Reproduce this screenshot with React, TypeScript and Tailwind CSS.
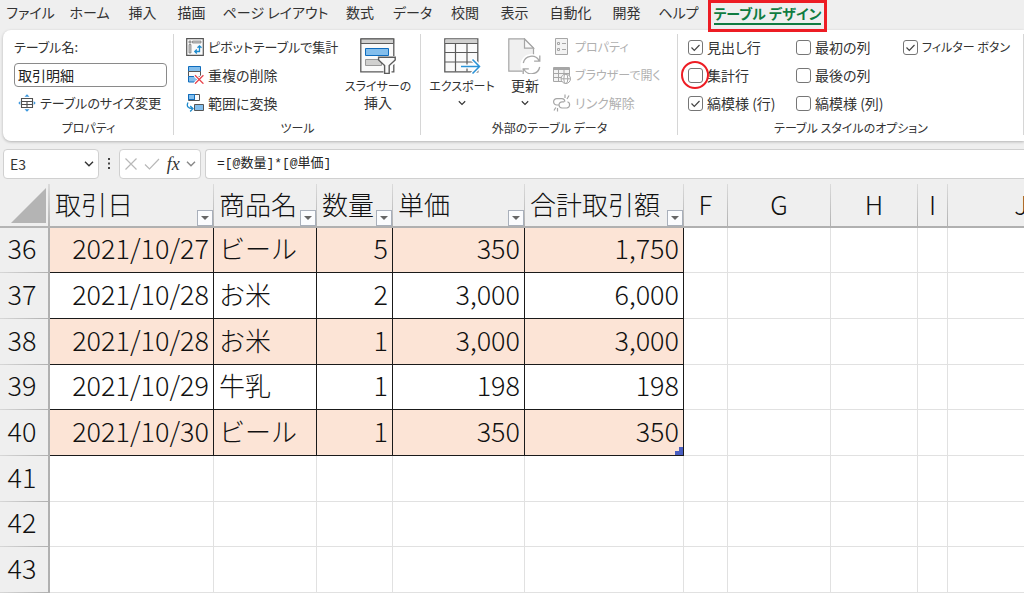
import { FC, ReactNode, useState } from "react"
import clsx from "clsx"

const tabs = [
  { title: "ファイル", width: "w-[61px]" },
  { title: "ホーム", width: "w-[57px]" },
  { title: "挿入", width: "w-[49px]" },
  { title: "描画", width: "w-[49px]" },
  { title: "ページ レイアウト", width: "w-[119px]" },
  { title: "数式", width: "w-[50px]" },
  { title: "データ", width: "w-[55px]" },
  { title: "校閲", width: "w-[50px]" },
  { title: "表示", width: "w-[49px]" },
  { title: "自動化", width: "w-[63px]" },
  { title: "開発", width: "w-[49px]" },
  { title: "ヘルプ", width: "w-[55px]" },
]

const columns = [
  { title: "取引日", width: "w-[164px]", filter: true },
  { title: "商品名", width: "w-[103px]", filter: true },
  { title: "数量", width: "w-[76px]", filter: true },
  { title: "単価", width: "w-[132px]", filter: true },
  { title: "合計取引額", width: "w-[159px]", filter: true },
  { title: "F", width: "w-[44px]" },
  { title: "G", width: "w-[103px]" },
  { title: "H", width: "w-[87px]" },
  { title: "I", width: "w-[30px]" },
  { title: "J", width: "w-[147px]" },
]

const rows: { no: number; cells: string[] }[] = [
  { no: 36, cells: ["2021/10/27", "ビール", "5", "350", "1,750"] },
  { no: 37, cells: ["2021/10/28", "お米", "2", "3,000", "6,000"] },
  { no: 38, cells: ["2021/10/28", "お米", "1", "3,000", "3,000"] },
  { no: 39, cells: ["2021/10/29", "牛乳", "1", "198", "198"] },
  { no: 40, cells: ["2021/10/30", "ビール", "1", "350", "350"] },
  { no: 41, cells: [] },
  { no: 42, cells: [] },
  { no: 43, cells: [] },
]

const Chevron: FC<{ className?: string }> = ({ className }) => (
  <svg className={className} width="10" height="6" viewBox="0 0 10 6" fill="none" stroke="currentColor" strokeWidth="1.4">
    <path d="M1 .8 5 4.8 9 .8" />
  </svg>
)

const ResizeIcon = () => (
  <svg width="18" height="18" viewBox="0 0 18 18" fill="none">
    <path d="M3.500 4.500h11v9h-11zM3.500 7.500h11M9 7.500v6M3.500 10.500h11" stroke="#505050" strokeWidth="1.100" />
    <path d="M9 .300 11.500 2.800h-5zM9 17.700l2.500-2.500h-5zM.300 9l2-2v4zM17.700 9l-2-2v4z" fill="#3a96dd" />
  </svg>
)

const PivotIcon = () => (
  <svg width="18" height="18" viewBox="0 0 18 18" fill="none">
    <path d="M.7.700h16.600v16.600H.7z" stroke="#555" strokeWidth="1.200" fill="#fafafa" />
    <path d="M3 3h2v2H3zM6.500 3h8.500v2H6.500zM3 6.500h2V15H3z" fill="#c8c8c8" stroke="#777" strokeWidth=".7" />
    <path d="M9 13.500h4.500V8M11.500 9.800l2-2 2 2M10.800 11.500l-2 2 2 2" stroke="#1e8bcd" strokeWidth="1.300" />
  </svg>
)

const DuplicateIcon = () => (
  <svg width="18" height="18" viewBox="0 0 18 18" fill="none">
    <path d="M2.500.500h12v5h-12z" fill="#83beec" stroke="#0f6cbd" />
    <path d="M2.500 5.500h12v5h-12z" fill="#fafafa" stroke="#555" />
    <path d="M2.500 10.500h8v5.500h-8z" fill="#83beec" stroke="#0f6cbd" />
    <path d="m9 9.300 8.400 8.400M17.400 9.300 9 17.700" stroke="#fff" strokeWidth="3.500" />
    <path d="m9 9.300 8.400 8.400M17.400 9.300 9 17.700" stroke="#e8434b" strokeWidth="1.300" />
  </svg>
)

const ConvertIcon = () => (
  <svg width="18" height="18" viewBox="0 0 18 18" fill="none">
    <path d="M2.500.500h11v6h-11zM8.500.500v6" fill="#fafafa" stroke="#555" />
    <path d="M2.500.500h6v5h-6z" fill="#83beec" stroke="#0f6cbd" />
    <path d="M8.500 10.500h9v6h-9z" fill="#83beec" stroke="#555" />
    <path d="M2 8.500C.2 12 2 14.500 6.500 14.500M4.200 12 7 14.500l-2.800 3" stroke="#1e8bcd" strokeWidth="1.300" />
  </svg>
)

const SlicerIcon = () => (
  <svg width="36" height="36" viewBox="0 0 36 36" fill="none">
    <path d="M.8.800h33v33H.8z" fill="#fafafa" stroke="#5b5b5b" strokeWidth="1.300" />
    <path d="M1 1h32.600v4.500H1z" fill="#d0d0cf" stroke="#5b5b5b" />
    <path d="M5.500 10.500h23v7h-23z" fill="#83beec" stroke="#0f6cbd" />
    <path d="M5.500 21.500h16v6h-16z" fill="#d0d0cf" stroke="#999" />
    <path d="M17.500 18h20v6l-6 4v9h-8v-9z" fill="#fff" />
    <path d="M18.600 19.200h16.600v2.800l-6 5.500v8h-4.600v-8l-6-5.500z" fill="#fafafa" stroke="#5b5b5b" strokeWidth="1.400" />
  </svg>
)

const ExportIcon = () => (
  <svg width="37" height="36" viewBox="0 0 37 36" fill="none">
    <path d="M.8.800h33v33H.8z" fill="#fafafa" stroke="#5b5b5b" strokeWidth="1.300" />
    <path d="M1.500 1.500h31.600v4H1.500z" fill="#d0d0cf" />
    <path d="M1 5.500h33M1 14.500h33M1 24h33M11.500 5.500v28M23 5.500v28" stroke="#5b5b5b" strokeWidth="1.200" />
    <path d="M17 28.500h19M28 21l8 7.500-8 7.500" stroke="#fff" strokeWidth="4" />
    <path d="M17 28.500h18M28.500 21.500l7 7-7 7" stroke="#2a92d6" strokeWidth="1.500" />
  </svg>
)

const RefreshIcon = () => (
  <svg width="34" height="36" viewBox="0 0 34 36" fill="none">
    <path d="M.8.800h15.700L25.500 10v23.200H.8z" fill="#f0f0f0" stroke="#a6a6a6" strokeWidth="1.200" />
    <path d="M16.500 1v9.200h9z" fill="#fafafa" stroke="#a6a6a6" strokeWidth="1.200" />
    <circle cx="23.500" cy="27" r="11" fill="#fff" />
    <path d="M15.300 25a8.500 8.500 0 0 1 15.700-2.500M31.700 29A8.500 8.500 0 0 1 16 31.500M31.800 17.500v5.700h-5.700M15.200 36v-5.200h5.600" stroke="#a6a6a6" strokeWidth="1.300" />
  </svg>
)

const PropertyIcon = () => (
  <svg width="18" height="18" viewBox="0 0 18 18" fill="none" stroke="#a6a6a6">
    <path d="M2.500.500h12v16h-12z" fill="#f3f3f3" />
    <path d="M4.500 4.500h2v2h-2zM4.500 10.500h2v2h-2zM9 5.500h4M9 11.500h4" />
  </svg>
)

const BrowserIcon = () => (
  <svg width="18" height="18" viewBox="0 0 18 18" fill="none" stroke="#a6a6a6">
    <path d="M.5 1.500h16v14H.5z" fill="#f3f3f3" />
    <path d="M.5 3h16" strokeWidth="2" />
    <path d="M.5 7.500h16M.5 11.500h10M5.500 4v11.500M11 4v6" />
    <circle cx="12.800" cy="12.800" r="4.700" fill="#fff" />
    <ellipse cx="12.800" cy="12.800" rx="2" ry="4.700" />
    <path d="M8.200 12.800h9.200" />
  </svg>
)

const UnlinkIcon = () => (
  <svg width="18" height="18" viewBox="0 0 18 18" fill="none" stroke="#a6a6a6" strokeWidth="1.200">
    <path d="M6 11H3.800a3.200 3.200 0 0 1 0-6.400h5c1.800 0 3 1.400 3 3.200M14.500 7.800a3.200 3.200 0 0 1-.8 6.200H9C7.200 14 6 12.600 6 11c0-1.800 1.400-3.200 3.200-3.200h2" />
    <path d="M12 4V.500M14 5l2-3.500M4.500 14v3.500M2.800 13.500 1 16.500" />
  </svg>
)

interface GroupProps {
  title: string
  className?: string
  children: ReactNode
}

const Group: FC<GroupProps> = ({ title, className, children }) => (
  <section className={clsx("relative flex flex-col pt-[3px] after:absolute after:top-1 after:right-0 after:bottom-1.5 after:w-px after:bg-[#d6d6d6]", className)}>
    <div className="flex h-[85px]">{children}</div>
    <h2 className="text-center text-[12px] leading-5">{title}</h2>
  </section>
)

interface ToolButtonProps {
  icon: ReactNode
  title: string
  disabled?: boolean
  className?: string
}

const ToolButton: FC<ToolButtonProps> = ({ icon, title, disabled, className = "text-[13px]" }) => (
  <button disabled={disabled} className={clsx("flex h-7 items-center gap-1 whitespace-nowrap disabled:text-[#b0b0b0]", className)}>
    {icon}
    {title}
  </button>
)

interface BigButtonProps {
  icon: ReactNode
  className: string
  children: ReactNode
}

const BigButton: FC<BigButtonProps> = ({ icon, className, children }) => (
  <button className={clsx("flex shrink-0 flex-col items-center pt-[5px] leading-[17px] whitespace-nowrap", className)}>
    {icon}
    <span className="mt-[3px] flex flex-col items-center">{children}</span>
  </button>
)

interface OptionProps {
  title: string
  checked?: boolean
  marked?: boolean
  className?: string
}

const Option: FC<OptionProps> = ({ title, checked = false, marked, className = "text-[14px]" }) => {
  const [isChecked, setIsChecked] = useState<boolean>(checked)
  return (
    <label className={clsx("relative flex h-7 items-center gap-1 whitespace-nowrap", className)}>
      <span className="grid">
        <input
          type="checkbox"
          className="peer col-start-1 row-start-1 size-[15px] appearance-none rounded-[3px] border border-[#767676] bg-white"
          checked={isChecked}
          onChange={() => { setIsChecked(!isChecked) }}
        />
        <svg className="pointer-events-none invisible col-start-1 row-start-1 size-[15px] peer-checked:visible" viewBox="0 0 15 15" fill="none" stroke="#444" strokeWidth="1.200">
          <path d="m3.500 7.500 2.800 2.800 5.200-5.300" />
        </svg>
      </span>
      {title}
      {marked && <span className="pointer-events-none absolute -left-[7px] size-7 rounded-full border-2 border-[#ed1c24]" />}
    </label>
  )
}

const Ribbon = () => (
  <div className="ml-[3px] flex h-[111px] rounded-l-lg bg-white text-[#333] shadow-[0_1px_3px_rgba(0,0,0,0.25)]">
    <Group title="プロパティ" className="w-[171px] shrink-0">
      <div className="flex flex-col pl-[11px]">
        <label htmlFor="table-name" className="text-[13px] leading-7">テーブル名:</label>
        <div className="flex h-7 items-center">
          <input id="table-name" defaultValue="取引明細" className="h-6 w-[153px] rounded-[4px] border border-[#8a8a8a] bg-white px-[3px] text-[14px] text-[#222]" />
        </div>
        <div className="pl-1">
          <ToolButton icon={<ResizeIcon />} title="テーブルのサイズ変更" />
        </div>
      </div>
    </Group>
    <Group title="ツール" className="w-[247px] shrink-0">
      <div className="flex flex-col pl-3">
        <ToolButton icon={<PivotIcon />} title="ピボットテーブルで集計" />
        <ToolButton icon={<DuplicateIcon />} title="重複の削除" className="text-[14px]" />
        <ToolButton icon={<ConvertIcon />} title="範囲に変換" className="text-[14px]" />
      </div>
      <BigButton icon={<SlicerIcon />} className="mr-1.5 ml-auto w-[74px]">
        <span className="text-[12px]">スライサーの</span>
        <span className="text-[14px]">挿入</span>
      </BigButton>
    </Group>
    <Group title="外部のテーブル データ" className="w-[257px] shrink-0">
      <BigButton icon={<ExportIcon />} className="ml-1.5 w-[70px]">
        <span className="text-[12px]">エクスポート</span>
        <Chevron className="mt-1.5 w-2" />
      </BigButton>
      <BigButton icon={<RefreshIcon />} className="ml-1 w-[48px]">
        <span className="text-[14px]">更新</span>
        <Chevron className="mt-1.5 w-2" />
      </BigButton>
      <div className="flex flex-col pl-1">
        <ToolButton disabled icon={<PropertyIcon />} title="プロパティ" className="text-[12px]" />
        <ToolButton disabled icon={<BrowserIcon />} title="ブラウザーで開く" className="text-[12px]" />
        <ToolButton disabled icon={<UnlinkIcon />} title="リンク解除" className="text-[13px]" />
      </div>
    </Group>
    <Group title="テーブル スタイルのオプション" className="min-w-[346px] flex-1">
      <div className="grid grid-cols-[108px_107px_auto] content-start pl-2.5">
        <Option title="見出し行" checked />
        <Option title="最初の列" />
        <Option title="フィルター ボタン" checked className="text-[12px]" />
        <Option title="集計行" marked />
        <Option title="最後の列" />
        <span />
        <Option title="縞模様 (行)" checked />
        <Option title="縞模様 (列)" />
      </div>
    </Group>
  </div>
)

const FormulaBar = () => (
  <div className="mt-2 flex h-[30px] items-stretch pl-[3px] text-[#333]">
    <div className="flex w-24 items-center rounded-[4px] border border-[#d0d0d0] bg-white pr-1">
      <input aria-label="名前ボックス" defaultValue="E3" className="w-full min-w-0 bg-transparent pl-1.5 text-[14px]" />
      <button aria-label="名前の一覧"><Chevron /></button>
    </div>
    <svg className="mx-2 self-center" width="4" height="12" viewBox="0 0 4 12" fill="#444">
      <path d="M1 0h2v2H1zM1 4.500h2v2H1zM1 9h2v2H1z" />
    </svg>
    <div className="flex w-[82px] items-center justify-between rounded-[4px] border border-[#d0d0d0] bg-white px-1">
      <button aria-label="キャンセル" className="text-[#b8b8b8]">
        <svg width="14" height="14" viewBox="0 0 14 14" fill="none" stroke="currentColor" strokeWidth="1.200"><path d="m1.500 1.500 11 11M12.500 1.500l-11 11" /></svg>
      </button>
      <button aria-label="入力" className="text-[#b8b8b8]">
        <svg width="16" height="14" viewBox="0 0 16 14" fill="none" stroke="currentColor" strokeWidth="1.200"><path d="m1 7.500 4.500 4.500L15 2" /></svg>
      </button>
      <button aria-label="関数の挿入" className="font-['Liberation_Serif',serif] text-[18px] leading-5 font-medium italic">fx</button>
      <button aria-label="関数の一覧" className="text-[#888]"><Chevron /></button>
    </div>
    <input
      aria-label="数式バー"
      defaultValue="=[@数量]*[@単価]"
      className="ml-1 min-w-0 flex-1 rounded-l-[4px] border border-r-0 border-[#d0d0d0] bg-white pl-[11px] font-['Liberation_Mono','Noto_Sans_CJK_JP',monospace] text-[13px] text-[#222]"
    />
  </div>
)

const Sheet = () => (
  <div className="mt-[5px] overflow-hidden [font-feature-settings:normal]">
    <table className="w-[1095px] table-fixed border-separate border-spacing-0 text-[26px] leading-8 font-light text-[#111]">
      <thead>
        <tr className="h-11">
          <th className="w-[50px] border-r-2 border-b-2 p-0 align-bottom [border-image:linear-gradient(to_bottom,#dcdcdc,#b4b4b4)_1]">
            <svg className="mb-[3px] ml-[11px]" width="35" height="35" viewBox="0 0 35 35" fill="#b4b4b4"><path d="M35 0v35H0z" /></svg>
          </th>
          {columns.map(({ title, width, filter }) => (
            <th
              key={title}
              className={clsx(
                "relative border-r border-b-2 p-0 pb-0.5 font-light whitespace-nowrap [border-image:linear-gradient(to_bottom,#dcdcdc,#b0b0b0)_1]",
                width,
                filter ? "pl-[5px] text-left" : "text-center",
              )}
            >
              {title}
              {filter && (
                <button aria-label={`${title}のフィルター`} className="absolute right-0 bottom-0 grid size-4 place-items-center border border-[#a9b0bb] bg-[#fbfcfe]">
                  <svg width="8" height="4" viewBox="0 0 8 4" fill="#666"><path d="M0 0h8L4 4z" /></svg>
                </button>
              )}
            </th>
          ))}
        </tr>
      </thead>
      <tbody>
        {rows.map(({ no, cells }) => (
          <tr key={no} className="h-[46px] nth-[3n+1]:h-[45px]">
            <th className="border-r-2 border-b p-0 pr-1 pb-1 text-center text-[27px] font-light [border-image:linear-gradient(to_right,#d8d8d8,#b0b0b0)_1]">{no}</th>
            {columns.map(({ title }, i) => (
              <td
                key={title}
                className={clsx(
                  "relative border-r border-b p-0 pb-1 whitespace-nowrap",
                  i < cells.length ? "border-[#1a1a1a]" : "border-[#e1e1e1]",
                  i < cells.length && no % 2 === 0 ? "bg-[#fce4d6]" : "bg-white",
                  i === 1 ? "pl-[5px]" : "pr-1 text-right text-[27px]",
                )}
              >
                {cells[i]}
                {no === 40 && i === 4 && (
                  <svg className="absolute right-0 bottom-0" width="8" height="8" viewBox="0 0 8 8" fill="#4a5fc1"><path d="M4 0h4v8H0V4h4z" /></svg>
                )}
              </td>
            ))}
          </tr>
        ))}
      </tbody>
    </table>
  </div>
)

const App = () => {
  return (
    <main className="min-h-screen overflow-hidden bg-[#efefef] font-['Noto_Sans_CJK_JP',sans-serif] [font-feature-settings:'palt']">
      <nav className="flex h-[30px] text-[14px] text-[#333]">
        {tabs.map(({ title, width }) => (
          <button key={title} className={clsx("flex h-6 shrink-0 items-center justify-center whitespace-nowrap", width)}>
            {title}
          </button>
        ))}
        <button className="relative z-10 ml-0.5 flex h-8 w-[119px] shrink-0 items-start justify-center border-[3px] border-[#ed1c24] text-[#107c41]">
          <span className="border-b-2 border-[#107c41] leading-5 font-bold whitespace-nowrap">テーブル デザイン</span>
        </button>
      </nav>
      <Ribbon />
      <FormulaBar />
      <Sheet />
    </main>
  )
}

export default App
